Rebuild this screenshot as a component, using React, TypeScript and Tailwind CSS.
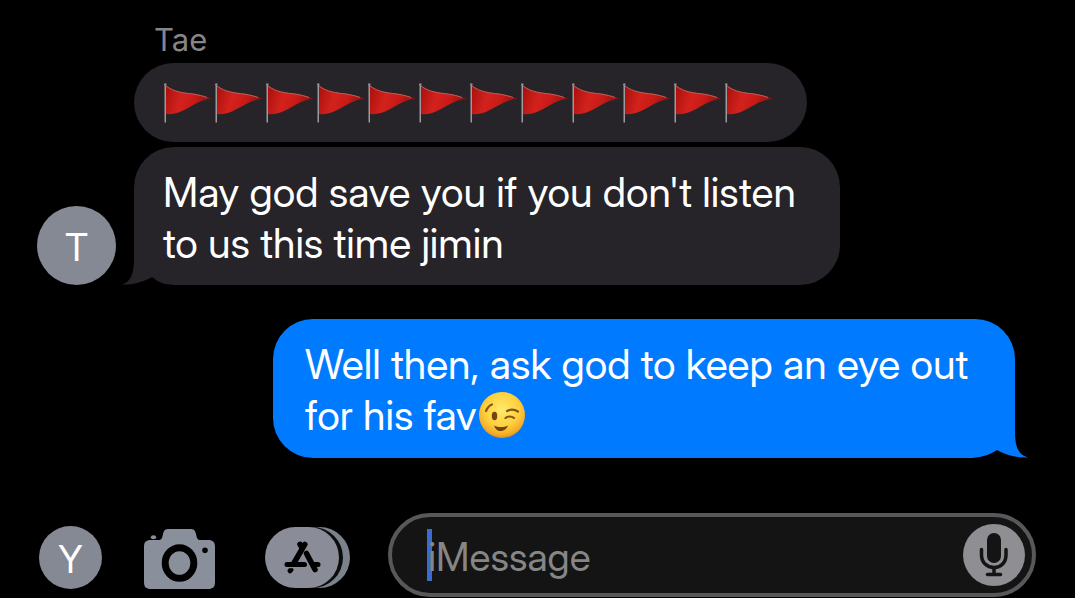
import type { ReactNode } from "react";

const Flag = () => (
  <svg viewBox="0 0 51 51" className="h-[51px] w-[51px] shrink-0" aria-hidden="true">
    <defs>
      <linearGradient id="flagFill" x1="0" y1="0" x2="1" y2="0.2">
        <stop offset="0" stopColor="#a8100c" />
        <stop offset="0.4" stopColor="#d3221d" />
        <stop offset="0.7" stopColor="#c81a16" />
        <stop offset="1" stopColor="#8a1410" />
      </linearGradient>
    </defs>
    <path d="M3 9C11 15 21 16 30 17C37 18 43 19.500 49 22C38 22 28 30 18 34.500C12 37 8 37.500 3 37Z" fill="url(#flagFill)" />
    <path d="M3 9C11 15 21 16 30 17C36 18 40 19 44 20.500" fill="none" stroke="#c4605a" strokeWidth="1" />
    <rect x="1.500" y="7" width="1.500" height="38.500" fill="#9c9a9e" />
    <circle cx="2.300" cy="7.500" r="1.300" fill="#8c8a90" />
  </svg>
);

const Wink = () => (
  <svg viewBox="0 0 48 48" className="inline-block h-12 w-12 align-[-9px]" role="img" aria-label="winking face">
    <defs>
      <radialGradient id="face" cx="0.5" cy="0.38" r="0.62">
        <stop offset="0" stopColor="#ffea6b" />
        <stop offset="0.6" stopColor="#fdd03f" />
        <stop offset="0.88" stopColor="#f5ac27" />
        <stop offset="1" stopColor="#e08f1d" />
      </radialGradient>
    </defs>
    <circle cx="25" cy="24" r="23" fill="url(#face)" />
    <ellipse cx="17.500" cy="25" rx="2.700" ry="4.200" fill="#74430f" />
    <g fill="none" stroke="#8a5312" strokeWidth="2.200" strokeLinecap="round">
      <path d="M9 20C10.500 16.500 12 14.500 15 13.500" />
      <path d="M30 20C33.500 18 38 18.500 41 20.500" />
      <path d="M28.500 27C30.500 25 34.500 25 37 27" />
    </g>
    <path d="M17 34.500C21 36.500 27 36.500 31 34.500C29.500 38.500 26.500 40 23.500 40C20.500 40 18.500 38.500 17 34.500Z" fill="#74430f" />
  </svg>
);

const Camera = () => (
  <svg viewBox="0 0 71 60" className="h-[60px] w-[71px]" aria-hidden="true">
    <path
      fill="#8a909b"
      d="M7 11H14C18 11 18 9 19 5C20 1 21 0 25 0H46C50 0 51 1 52 5C53 9 53 11 57 11H64C69 11 71 13 71 18V53C71 58 69 60 64 60H7C2 60 0 58 0 53V18C0 13 2 11 7 11Z"
    />
    <ellipse cx="9.500" cy="8.200" rx="2.700" ry="2" fill="#8a909b" />
    <ellipse cx="35.500" cy="34" rx="14.300" ry="15.300" fill="none" stroke="#000" strokeWidth="7" />
    <circle cx="61" cy="21.300" r="2.800" fill="#000" />
  </svg>
);

const Apps = () => (
  <svg viewBox="0 0 85 61" className="h-[61px] w-[85px]" aria-hidden="true">
    <rect x="24" width="61" height="61" rx="30.500" fill="#7c828b" />
    <rect x="17" width="61" height="61" rx="30.500" fill="#0b0c0e" />
    <rect width="74" height="61" rx="30.500" fill="#8a8d97" />
    <g fill="none" stroke="#000" strokeWidth="5.500" strokeLinecap="round">
      <path d="M39.800 17.300L29 36" />
      <path d="M35 17.300L37 20.500" />
      <path d="M41.500 26.500L50 42.500" />
      <path d="M22 37.500H39.500" strokeWidth="5" />
      <path d="M49 37.500H53" strokeWidth="5" />
      <path d="M25 43.800L26 42.800" strokeWidth="5" />
    </g>
    <path d="M22 40.600H30" fill="none" stroke="#8a8d97" strokeWidth="1.200" />
  </svg>
);

const Mic = () => (
  <svg viewBox="0 0 62 62" className="h-[62px] w-[62px]" aria-hidden="true">
    <circle cx="31" cy="31" r="31" fill="#8e8e93" />
    <rect x="24" y="9" width="14" height="30" rx="7" fill="#141414" />
    <g fill="none" stroke="#141414" strokeWidth="3.500" strokeLinecap="round">
      <path d="M18.500 25.500V31C18.500 38.500 24 43.500 31 43.500S43 38.500 43 31V25.500" />
      <path d="M31 44V50" />
      <path d="M24.500 50.500H37.500" />
    </g>
  </svg>
);

const Bubble = ({ className, children }: { className: string; children: ReactNode }) => (
  <div className={`relative w-fit rounded-[40px] text-[41px] leading-[51px] text-white ${className}`}>
    {children}
  </div>
);

export default function App() {
  return (
    <div className="flex min-h-screen flex-col bg-black font-['Inter_Display','Inter','Liberation_Sans',sans-serif]">
      <main className="flex grow flex-col pt-6">
        {/* Incoming messages */}
        <section className="flex items-end gap-[18px] pl-[37px]">
          <div className="flex h-[79px] w-[79px] shrink-0 items-center justify-center rounded-full bg-[#858993] pt-1 text-[38px] text-white">
            T
          </div>
          <div className="flex flex-col">
            <p className="mb-2 pl-5 font-['Inter','Liberation_Sans',sans-serif] text-[31px] leading-[31px] text-[#86868a]">Tae</p>
            <Bubble className="mb-[5px] bg-[#262329] py-[14px] pr-8 pl-[29px]">
              <div className="flex" role="img" aria-label="twelve red flags">
                {Array.from({ length: 12 }, (_, i) => (
                  <Flag key={i} />
                ))}
              </div>
            </Bubble>
            <Bubble className="max-w-[706px] bg-[#262329] pt-5 pr-8 pb-4 pl-[29px]">
              May god save you if you don't listen to us this time jimin
              <svg viewBox="0 0 44 50" className="absolute bottom-0 -left-3 h-[50px] w-11" aria-hidden="true">
                <path d="M0 49.500C11 50 21 47 30 42C34 45 38 48 44 50H0Z" fill="#000" />
                <path d="M12 0V24C12 38 9 47 0 49.500C11 50 21 47 30 42L22 32V0Z" fill="#262329" />
              </svg>
            </Bubble>
          </div>
        </section>

        {/* Outgoing message */}
        <section className="mt-[34px] flex justify-end pr-[60px]">
          <Bubble className="max-w-[742px] bg-[#007aff] pt-5 pr-10 pb-[17px] pl-8">
            Well then, ask god to keep an eye out for his fav
            <Wink />
            <svg viewBox="0 0 56 50" className="absolute -right-[13px] bottom-0 h-[50px] w-14" aria-hidden="true">
              <path d="M56 49.500C44 50 34 47 25 42C19 46 12 49 0 50H56Z" fill="#000" />
              <path d="M43 0V24C43 38 46 47 56 49.500C44 50 34 47 25 42L33 32V0Z" fill="#007aff" />
            </svg>
          </Bubble>
        </section>
      </main>

      {/* Compose bar */}
      <form className="flex items-center pr-[39px] pb-px pl-[39px]">
        <div className="mt-1 flex h-[63px] w-[63px] shrink-0 items-center justify-center rounded-full bg-[#858993] pt-1 text-[38px] text-white">
          Y
        </div>
        <button type="button" aria-label="Camera" className="mt-2 ml-[42px] shrink-0">
          <Camera />
        </button>
        <button type="button" aria-label="Apps" className="mt-1 ml-[50px] shrink-0">
          <Apps />
        </button>
        <div className="relative ml-[38px] flex h-[84px] min-w-0 grow items-center rounded-full border-4 border-[#58585a] bg-[#141414] pr-[7px] pl-9">
          <span className="absolute left-[35px] h-[52px] w-[5px] bg-[#3a6bd0]" />
          <input
            type="text"
            aria-label="Message"
            placeholder="iMessage"
            className="relative min-w-0 grow bg-transparent pt-1 text-[39px] leading-[50px] text-white outline-none placeholder:text-[#868686]"
          />
          <button type="button" aria-label="Dictate" className="shrink-0">
            <Mic />
          </button>
        </div>
      </form>
    </div>
  );
}
